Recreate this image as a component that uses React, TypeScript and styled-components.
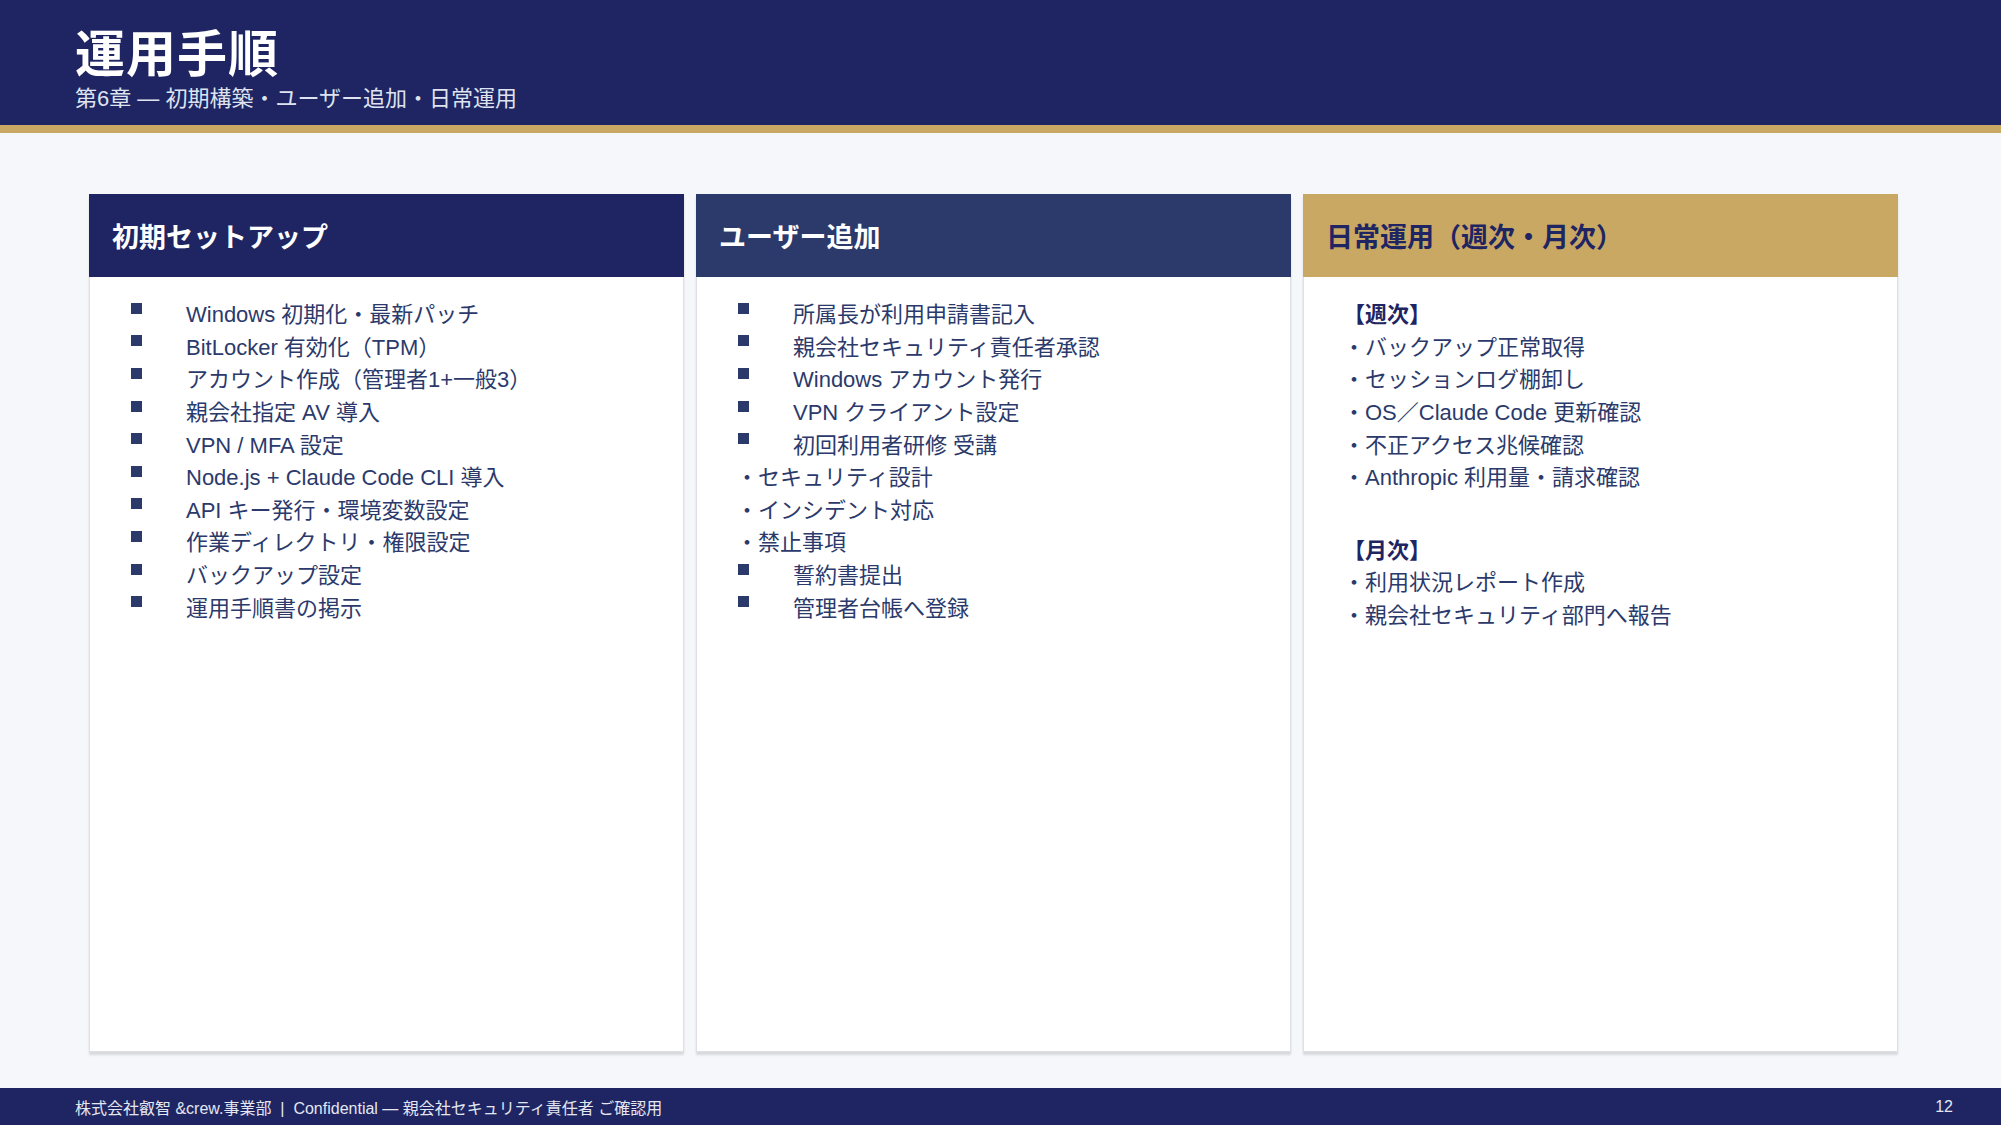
import React from "react";
import styled, { createGlobalStyle } from "styled-components";

const Global = createGlobalStyle`
  html, body { margin: 0; padding: 0; }
  body { background: #f5f7fa; font-family: "Liberation Sans", "Noto Sans CJK JP", sans-serif; }
`;

const Page = styled.div`
  width: 2001px; height: 1125px; display: flex; flex-direction: column; background: #f5f7fa; overflow: hidden;
`;
const Header = styled.header`
  height: 125px; background: #1e2562; border-bottom: 8px solid #c8a862;
  padding: 24px 0 0 75px; box-sizing: content-box; box-sizing: border-box; height: 133px;
  display: flex; flex-direction: column;
`;
const Title = styled.h1`
  margin: 0; color: #fff; font-size: 50px; font-weight: 700; line-height: 62px; letter-spacing: 1px;
`;
const Sub = styled.div`
  color: #dfe3f0; font-size: 22px; line-height: 26px;
`;
const Main = styled.main`
  flex: 1; display: grid; grid-template-columns: repeat(3, 595px); gap: 12px;
  padding: 61px 0 36px 89px;
`;
const Panel = styled.section`
  background: #fff; border: 1px solid #dde0e6; border-top: none; box-shadow: 0 3px 2px rgba(0,0,0,0.12);
  display: flex; flex-direction: column;
`;
const PanelHead = styled.div<{ $bg: string; $fg: string }>`
  height: 83px; background: ${p => p.$bg}; color: ${p => p.$fg}; display: flex; align-items: center;
  padding-left: 23px; font-size: 27px; font-weight: 700; margin: 0 -1px;
`;
const List = styled.div`
  padding: 19px 0 0 39px; color: #2b3a6b; font-size: 22px;
`;
const Row = styled.div`
  height: 32.6px; display: flex; align-items: center;
`;
const Square = styled.span`
  width: 11px; height: 11px; background: #2b3a6b; margin: 0 44px 0 2px; flex: none; position: relative; top: -4px;
`;
const Label = styled.div`
  font-weight: 700; color: #1e2562;
`;
const Gap = styled.div` height: 40px; `;
const Footer = styled.footer`
  height: 37px; background: #1e2562; color: #e4e7f1; display: flex; align-items: center;
  justify-content: space-between; padding: 0 48px 0 75px; font-size: 16px;
`;

const p1 = ["Windows 初期化・最新パッチ","BitLocker 有効化（TPM）","アカウント作成（管理者1+一般3）","親会社指定 AV 導入","VPN / MFA 設定","Node.js + Claude Code CLI 導入","API キー発行・環境変数設定","作業ディレクトリ・権限設定","バックアップ設定","運用手順書の掲示"];
const p2: [boolean, string][] = [[true,"所属長が利用申請書記入"],[true,"親会社セキュリティ責任者承認"],[true,"Windows アカウント発行"],[true,"VPN クライアント設定"],[true,"初回利用者研修 受講"],[false,"・セキュリティ設計"],[false,"・インシデント対応"],[false,"・禁止事項"],[true,"誓約書提出"],[true,"管理者台帳へ登録"]];
const w = ["・バックアップ正常取得","・セッションログ棚卸し","・OS／Claude Code 更新確認","・不正アクセス兆候確認","・Anthropic 利用量・請求確認"];
const m = ["・利用状況レポート作成","・親会社セキュリティ部門へ報告"];

export default function App() {
  return (
    <Page>
      <Global />
      <Header>
        <Title>運用手順</Title>
        <Sub>第6章 — 初期構築・ユーザー追加・日常運用</Sub>
      </Header>
      <Main>
        <Panel>
          <PanelHead $bg="#1e2562" $fg="#fff">初期セットアップ</PanelHead>
          <List>{p1.map(t => <Row key={t}><Square />{t}</Row>)}</List>
        </Panel>
        <Panel>
          <PanelHead $bg="#2b3a6b" $fg="#fff">ユーザー追加</PanelHead>
          <List>{p2.map(([sq, t]) => <Row key={t}>{sq && <Square />}{t}</Row>)}</List>
        </Panel>
        <Panel>
          <PanelHead $bg="#c8a862" $fg="#1e2562">日常運用（週次・月次）</PanelHead>
          <List>
            <Row><Label>【週次】</Label></Row>
            {w.map(t => <Row key={t}>{t}</Row>)}
            <Gap />
            <Row><Label>【月次】</Label></Row>
            {m.map(t => <Row key={t}>{t}</Row>)}
          </List>
        </Panel>
      </Main>
      <Footer>
        <span>株式会社叡智 &amp;crew.事業部 &nbsp;|&nbsp; Confidential — 親会社セキュリティ責任者 ご確認用</span>
        <span>12</span>
      </Footer>
    </Page>
  );
}
